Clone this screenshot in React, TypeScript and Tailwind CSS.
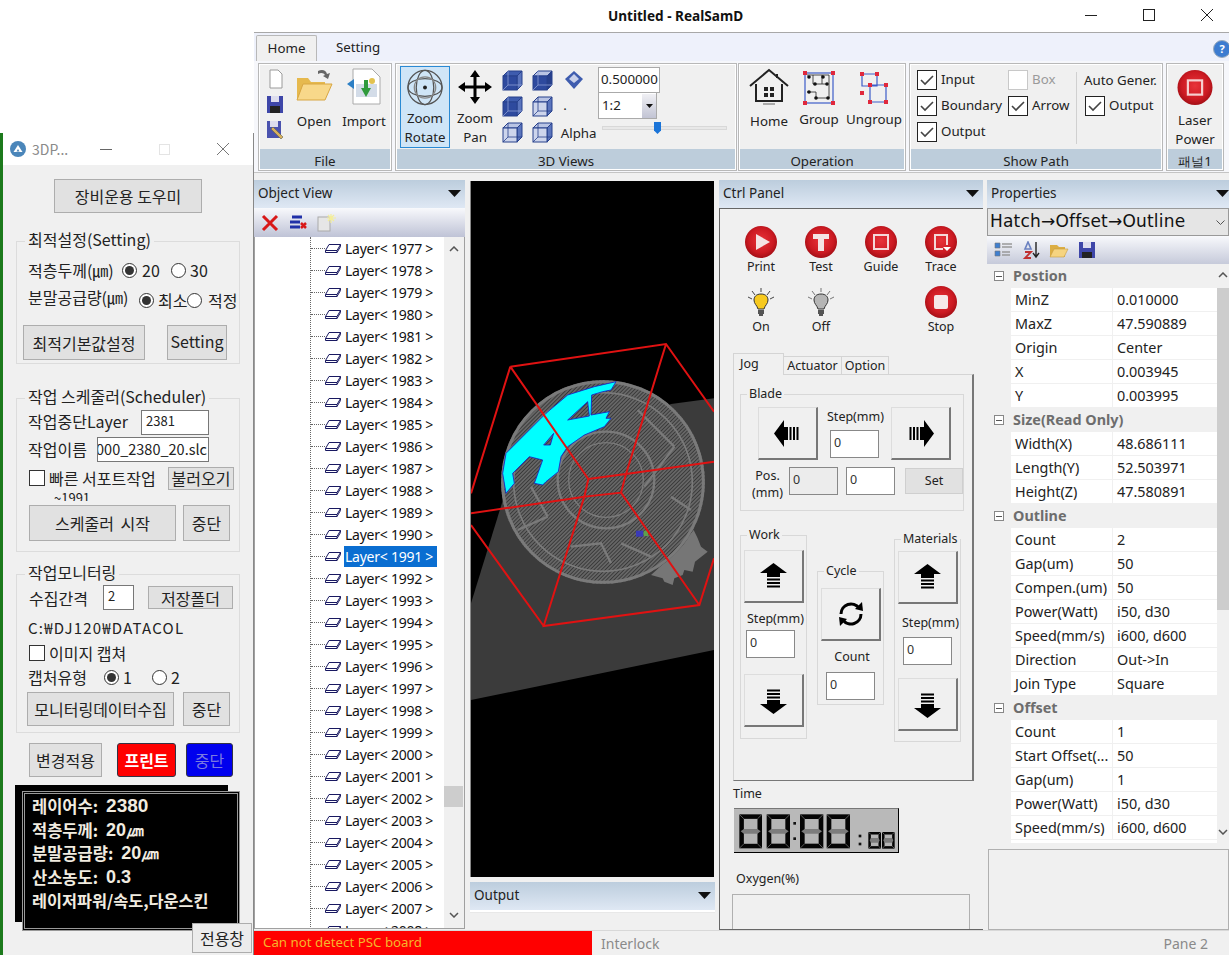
import type { ReactNode } from "react";

const ko = "font-['Noto_Sans_CJK_KR','Noto_Sans',sans-serif]";

const layers: number[] = [];
for (let n = 1977; n <= 2008; n++) layers.push(n);

const props: { title: string; rows: [string, string][] }[] = [
  {
    title: "Postion",
    rows: [
      ["MinZ", "0.010000"],
      ["MaxZ", "47.590889"],
      ["Origin", "Center"],
      ["X", "0.003945"],
      ["Y", "0.003995"],
    ],
  },
  {
    title: "Size(Read Only)",
    rows: [
      ["Width(X)", "48.686111"],
      ["Length(Y)", "52.503971"],
      ["Height(Z)", "47.580891"],
    ],
  },
  {
    title: "Outline",
    rows: [
      ["Count", "2"],
      ["Gap(um)", "50"],
      ["Compen.(um)", "50"],
      ["Power(Watt)", "i50, d30"],
      ["Speed(mm/s)", "i600, d600"],
      ["Direction", "Out->In"],
      ["Join Type", "Square"],
    ],
  },
  {
    title: "Offset",
    rows: [
      ["Count", "1"],
      ["Start Offset(...", "50"],
      ["Gap(um)", "1"],
      ["Power(Watt)", "i50, d30"],
      ["Speed(mm/s)", "i600, d600"],
    ],
  },
];

function Caret() {
  return (
    <svg width="13" height="8" viewBox="0 0 13 8">
      <polygon points="0,0 13,0 6.5,7" fill="#111" />
    </svg>
  );
}

function PanelHeader({ title }: { title: string }) {
  return (
    <div className="flex h-[28px] shrink-0 items-center justify-between bg-gradient-to-b from-[#bccddd] to-[#dfe8f4] pl-[4px] pr-[4px] text-[13.5px] text-[#222]">
      <span className="-mt-[1px]">{title}</span>
      <Caret />
    </div>
  );
}

function RibbonGroup({
  title,
  className,
  children,
}: {
  title: string;
  className: string;
  children: ReactNode;
}) {
  return (
    <div className={`flex shrink-0 flex-col border border-[#b8b8b8] bg-[#f0f0f0] ${className}`}>
      <div className="h-[86px] overflow-hidden border-x border-t border-white">{children}</div>
      <div className="flex h-[21px] items-center justify-center border border-t-0 border-white bg-[#bdcddb] pt-[5px] text-[13.3px] text-[#222]">
        {title}
      </div>
    </div>
  );
}

function BigLabel({ lines }: { lines: string[] }) {
  return (
    <div className="text-center text-[13.3px] leading-[19px] text-[#222]">
      {lines.map((l) => (
        <div key={l}>{l}</div>
      ))}
    </div>
  );
}

function Cube({ kind }: { kind: number }) {
  const solid = kind < 2;
  return (
    <svg width="21" height="21" viewBox="0 0 21 21">
      <polygon points="1,6 6,1 20,1 15,6" fill={kind === 0 ? "#3e5cae" : "#b9c4e4"} stroke="#27408c" />
      <polygon points="15,6 20,1 20,15 15,20" fill={kind === 1 ? "#27408c" : "#5b75bd"} stroke="#27408c" />
      <rect x="1" y="6" width="14" height="14" fill={solid ? "#2e4a9e" : "#cdd5ec"} stroke="#27408c" />
      <path d="M6 1V15H20M6 15L1 20" fill="none" stroke={solid ? "#8ea0d4" : "#27408c"} strokeWidth="0.8" />
    </svg>
  );
}

function Check({ on, off }: { on?: boolean; off?: boolean }) {
  return (
    <span
      className={`flex h-[20px] w-[20px] shrink-0 items-center justify-center border bg-white ${off ? "border-[#c8c8c8]" : "border-[#222]"}`}
    >
      {on && (
        <svg width="14" height="12" viewBox="0 0 14 12">
          <path d="M1 6L5 10L13 2" fill="none" stroke="#444" strokeWidth="1.6" />
        </svg>
      )}
    </span>
  );
}

function CheckRow({ label, off }: { label: string; off?: boolean }) {
  return (
    <div className={`flex h-[26px] items-center gap-[4px] text-[13.3px] ${off ? "text-[#9a9a9a]" : "text-[#222]"}`}>
      <Check on={!off} off={off} />
      <span>{label}</span>
    </div>
  );
}

function RedCircle({ size, children }: { size: number; children: ReactNode }) {
  return (
    <svg width={size} height={size} viewBox="0 0 32 32">
      <defs>
        <radialGradient id="redball" cx="50%" cy="45%" r="55%">
          <stop offset="0%" stopColor="#e8343a" />
          <stop offset="70%" stopColor="#cc1a22" />
          <stop offset="100%" stopColor="#a40f16" />
        </radialGradient>
      </defs>
      <circle cx="16" cy="16" r="16" fill="url(#redball)" />
      {children}
    </svg>
  );
}

function Bulb({ on }: { on: boolean }) {
  return (
    <svg width="26" height="30" viewBox="0 0 26 30">
      <path
        d="M13 0V4M4 3L7 7M22 3L19 7M0 9L4 11M26 9L22 11"
        stroke={on ? "#444" : "#777"}
        strokeWidth="1"
        fill="none"
      />
      <path
        d="M13 6C8 6 6 9 6 12C6 16 9 17 10 21H16C17 17 20 16 20 12C20 9 18 6 13 6Z"
        fill={on ? "#f7c91e" : "#b5b5b5"}
        stroke="#333"
      />
      <path d="M10 23H16M10 25H16M11 27H15" stroke="#222" strokeWidth="1.4" />
    </svg>
  );
}

function CtrlButton({ label, children }: { label: string; children: ReactNode }) {
  return (
    <div className="flex w-[60px] flex-col items-center text-[12.5px] leading-[16px] text-[#222]">
      <div className="flex h-[32px] items-end">{children}</div>
      <span className="mt-[1px]">{label}</span>
    </div>
  );
}

function JogArrow({ className }: { className?: string }) {
  return (
    <svg width="27" height="27" viewBox="0 0 27 27" className={className}>
      <polygon points="13.5,0 27,10 20,10 20,14 7,14 7,10 0,10" fill="#000" />
      <rect x="7" y="15.5" width="13" height="2" fill="#000" />
      <rect x="7" y="19" width="13" height="2" fill="#000" />
      <rect x="7" y="22.5" width="13" height="2" fill="#000" />
    </svg>
  );
}

function JogButton({ children }: { children: ReactNode }) {
  return (
    <div className="flex h-[53px] w-[60px] items-center justify-center border border-b-2 border-r-2 border-b-[#777] border-l-[#ddd] border-r-[#777] border-t-[#ddd] bg-[#f0f0f0]">
      {children}
    </div>
  );
}

function SmallInput({ disabled }: { disabled?: boolean }) {
  return (
    <div
      className={`h-[28px] w-[49px] border border-[#888] pl-[3px] text-[12.5px] leading-[24px] text-[#333] ${disabled ? "bg-[#ececec]" : "bg-white"}`}
    >
      0
    </div>
  );
}

function Group({
  title,
  className,
  children,
}: {
  title: string;
  className?: string;
  children: ReactNode;
}) {
  return (
    <fieldset className={`border border-[#d8d8d8] ${className ?? ""}`}>
      <legend className="ml-[6px] px-[2px] text-[12.5px] leading-[14px] text-[#222]">{title}</legend>
      {children}
    </fieldset>
  );
}

function LcdDigit({ x, y, w, h }: { x: number; y: number; w: number; h: number }) {
  const half = h / 2;
  const t = w * 0.2;
  return (
    <g>
      <rect x={x} y={y} width={w} height={h} fill="#050505" />
      <rect x={x + t} y={y + t} width={w - 2 * t} height={half - t - 4} fill="#b4b4b4" />
      <rect x={x + t} y={y + half + 4} width={w - 2 * t} height={half - t - 4} fill="#b4b4b4" />
      <polygon
        points={`${x + 4},${y + half} ${x + t},${y + half - 7} ${x + w - t},${y + half - 7} ${x + w - 4},${y + half} ${x + w - t},${y + half + 7} ${x + t},${y + half + 7}`}
        fill="#7c7c7c"
      />
      <path
        d={`M${x} ${y}L${x + t} ${y + t}M${x + w} ${y}L${x + w - t} ${y + t}M${x} ${y + h}L${x + t} ${y + h - t}M${x + w} ${y + h}L${x + w - t} ${y + h - t}`}
        stroke="#aaa"
        strokeWidth="1.5"
      />
    </g>
  );
}

function Viewport() {
  // drawn in 3x coordinates, origin at (470,330) of the page
  return (
    <svg width="243" height="696" viewBox="0 -447 729 2088" className="block bg-black">
      <defs>
        <pattern id="hatch" width="8" height="8" patternUnits="userSpaceOnUse" patternTransform="rotate(-45)">
          <rect width="8" height="8" fill="#666" />
          <rect width="8" height="2.5" fill="#353535" />
        </pattern>
      </defs>
      <polygon points="0,820 105,480 600,222 729,205 729,960 0,1110" fill="#3b3b3b" />
      <polygon
        points="540,735 575,745 580,755 605,765 610,745 635,735 640,720 665,725 672,695 710,665 690,650 680,625 668,600 600,680"
        fill="#767676"
      />
      <circle cx="396" cy="456" r="306" fill="url(#hatch)" />
      <g fill="none" stroke="#7a7a7a">
        <circle cx="396" cy="456" r="301" strokeWidth="9" />
        <circle cx="396" cy="456" r="268" strokeWidth="5" />
        <circle cx="405" cy="450" r="145" strokeWidth="7" />
        <circle cx="405" cy="450" r="112" strokeWidth="4" />
        <path
          d="M500 240L610 350M610 350L520 470M600 500L660 540M180 470L230 560M230 560L140 600M300 650L390 640L420 700M450 640L540 680"
          strokeWidth="7"
        />
      </g>
      <path
        d="M435 155L370 170L290 195L225 250L105 370L95 430L105 490L130 460L125 430L175 380L215 390L190 460L215 465L225 455L262 425L270 380L290 350L340 315L400 290L420 265L405 265L415 245L360 255L362 195L395 185L420 180ZM290 270L350 215L355 258ZM218 345L248 310L238 345Z"
        fill="#00ffff"
        fillRule="evenodd"
        stroke="#1420c8"
        strokeWidth="2.5"
      />
      <rect x="495" y="602" width="22" height="18" fill="#3a3ab8" />
      <rect x="518" y="602" width="14" height="16" fill="#5da04c" />
      <path
        d="M118 110L585 42L729 245M118 110L0 490M118 110L352 447M585 42L465 432M352 447L465 432L450 488L340 500L352 447M450 488L685 825M465 432L729 395M340 500L0 550M340 500L218 888L685 825L729 685M218 888L0 585"
        fill="none"
        stroke="#e01212"
        strokeWidth="6"
      />
    </svg>
  );
}

function SmallButton({ className, children }: { className: string; children: ReactNode }) {
  return (
    <div
      className={`flex items-center justify-center whitespace-nowrap border border-[#adadad] bg-[#e1e1e1] text-[#222] ${className}`}
    >
      {children}
    </div>
  );
}

function Radio({ on }: { on?: boolean }) {
  return (
    <span className="flex h-[15px] w-[15px] shrink-0 items-center justify-center rounded-full border border-[#333] bg-white">
      {on && <span className="h-[9px] w-[9px] rounded-full bg-[#333]" />}
    </span>
  );
}

function LeftGroup({
  title,
  className,
  children,
}: {
  title: string;
  className: string;
  children: ReactNode;
}) {
  return (
    <fieldset className={`mx-[13px] border border-[#dcdcdc] ${className}`}>
      <legend className="relative -top-[2px] ml-[8px] px-[3px] text-[16px] leading-[18px] text-[#222]">{title}</legend>
      {children}
    </fieldset>
  );
}

function LeftWindow() {
  return (
    <div
      className={`relative h-[822px] w-[254px] shrink-0 border-l-[3px] border-r border-l-[#1c7a1c] border-r-[#888] bg-[#f0f0f0] text-[16px] text-[#222] ${ko}`}
    >
      <div className="flex h-[32px] items-center bg-white pl-[7px] text-[14px] text-[#8a8a8a]">
        <svg width="16" height="16" viewBox="0 0 16 16">
          <circle cx="8" cy="8" r="8" fill="#4b86ba" />
          <path d="M3.5 11L8 4L12.5 11Z" fill="#fff" />
          <path d="M6.5 10.5L8 8L9.5 10.5Z" fill="#4b86ba" />
        </svg>
        <span className="ml-[6px] w-[68px]">3DP...</span>
        <span className="h-px w-[12px] bg-[#666]" />
        <span className="ml-[47px] h-[11px] w-[11px] border border-[#e4e4e4]" />
        <svg width="14" height="14" viewBox="0 0 14 14" className="ml-[46px]">
          <path d="M1 1L13 13M13 1L1 13" stroke="#777" />
        </svg>
      </div>

      <SmallButton className="ml-[51px] mt-[14px] h-[34px] w-[148px]">장비운용 도우미</SmallButton>

      <LeftGroup title="최적설정(Setting)" className="mt-[19px] h-[132px]">
        <div className="mt-[8px] flex h-[24px] items-center whitespace-nowrap pl-[11px]">
          <span className="w-[94px]">적층두께(㎛)</span>
          <Radio on />
          <span className="ml-[5px] w-[29px]">20</span>
          <Radio />
          <span className="ml-[4px]">30</span>
        </div>
        <div className="mt-[5px] flex h-[26px] items-center whitespace-nowrap pl-[11px]">
          <span className="-mt-[6px] w-[111px]">분말공급량(㎛)</span>
          <Radio on />
          <span className="ml-[4px] w-[29px]">최소</span>
          <Radio />
          <span className="ml-[6px]">적정</span>
        </div>
        <div className="mt-[12px] flex pl-[6px]">
          <SmallButton className="h-[35px] w-[122px]">최적기본값설정</SmallButton>
          <SmallButton className="ml-[22px] h-[35px] w-[60px] pb-[3px]">Setting</SmallButton>
        </div>
      </LeftGroup>

      <LeftGroup title="작업 스케줄러(Scheduler)" className="mt-[25px] h-[163px]">
        <div className="mt-[2px] flex h-[26px] items-center pl-[11px]">
          <span className="-mt-[3px] w-[113px]">작업중단Layer</span>
          <span className="flex h-[25px] w-[68px] items-start border border-[#777] bg-white pl-[4px] text-[13px] leading-[20px]">
            2381
          </span>
        </div>
        <div className="mt-[1px] flex h-[26px] items-center pl-[11px]">
          <span className="w-[69px]">작업이름</span>
          <span className="flex h-[25px] w-[112px] justify-end overflow-hidden whitespace-nowrap border border-[#777] bg-white pr-[1px] text-[14.5px] leading-[22px]">
            000_2380_20.slc
          </span>
        </div>
        <div className="mt-[4px] flex h-[24px] items-center pl-[12px]">
          <span className="h-[16px] w-[16px] shrink-0 border border-[#333] bg-white" />
          <span className="ml-[4px] w-[119px] whitespace-nowrap">빠른 서포트작업</span>
          <SmallButton className="h-[23px] w-[66px]">불러오기</SmallButton>
        </div>
        <div className="h-[11px] overflow-hidden pl-[37px] text-[13px] leading-[16px]">~1991</div>
        <div className="mt-[4px] flex pl-[12px]">
          <SmallButton className="h-[36px] w-[147px] [word-spacing:3px]">스케줄러 시작</SmallButton>
          <SmallButton className="ml-[7px] h-[36px] w-[47px]">중단</SmallButton>
        </div>
      </LeftGroup>

      <LeftGroup title="작업모니터링" className="mt-[13px] h-[168px]">
        <div className="mt-[2px] flex h-[25px] items-center pl-[12px]">
          <span className="w-[74px]">수집간격</span>
          <span className="h-[25px] w-[31px] border border-[#777] bg-white pl-[4px] text-[13px] leading-[20px]">2</span>
          <SmallButton className="ml-[14px] h-[23px] w-[85px]">저장폴더</SmallButton>
        </div>
        <div className="mt-[7px] h-[22px] pl-[11px] text-[15px] leading-[22px] tracking-[1.2px]">C:₩DJ120₩DATACOL</div>
        <div className="mt-[3px] flex h-[22px] items-center pl-[12px]">
          <span className="h-[16px] w-[16px] shrink-0 border border-[#333] bg-white" />
          <span className="ml-[4px]">이미지 캡쳐</span>
        </div>
        <div className="mt-[1px] flex h-[24px] items-center pl-[11px]">
          <span className="w-[76px]">캡처유형</span>
          <Radio on />
          <span className="ml-[4px] w-[29px]">1</span>
          <Radio />
          <span className="ml-[4px]">2</span>
        </div>
        <div className="mt-[3px] flex pl-[10px]">
          <SmallButton className="h-[34px] w-[147px]">모니터링데이터수집</SmallButton>
          <SmallButton className="ml-[9px] h-[34px] w-[47px]">중단</SmallButton>
        </div>
      </LeftGroup>

      <div className="ml-[26px] mt-[10px] flex">
        <SmallButton className="h-[34px] w-[73px]">변경적용</SmallButton>
        <div className="ml-[15px] flex h-[34px] w-[59px] items-center justify-center rounded-[3px] border border-[#334] bg-[#ff0000] font-bold text-white">
          프린트
        </div>
        <div className="ml-[10px] flex h-[34px] w-[47px] items-center justify-center rounded-[3px] border border-[#334] bg-[#0000ee] text-[#7a7ae0]">
          중단
        </div>
      </div>

      <div className="relative ml-[12px] mt-[8px] h-[137px] w-[213px] bg-black">
        <div className="absolute left-[7px] top-[6px] h-[140px] w-[218px] border-[3px] border-double border-[#999] bg-black pl-[7px] font-bold text-[#f1ece0]">
          <div className="flex h-[24px] items-center gap-[8px] text-[16.5px]">
            레이어수: <span className="font-['Liberation_Sans',sans-serif] text-[19px]">2380</span>
          </div>
          <div className="flex h-[24px] items-center gap-[8px] text-[16.5px]">
            적층두께: <span className="font-['Liberation_Sans',sans-serif] text-[18px]">20㎛</span>
          </div>
          <div className="flex h-[23px] items-center gap-[8px] text-[16.5px]">
            분말공급량: <span className="font-['Liberation_Sans',sans-serif] text-[18px]">20㎛</span>
          </div>
          <div className="flex h-[24px] items-center gap-[8px] text-[16.5px]">
            산소농도: <span className="font-['Liberation_Sans',sans-serif] text-[18px]">0.3</span>
          </div>
          <div className="flex h-[22px] items-center whitespace-nowrap text-[16.3px]">레이저파워/속도,다운스킨</div>
        </div>
      </div>
      <SmallButton className="absolute left-[189px] top-[790px] h-[30px] w-[60px] bg-[#ececec]">전용창</SmallButton>
    </div>
  );
}

function MainWindow() {
  return (
    <div className="flex h-[955px] w-[975px] shrink-0 flex-col bg-[#f0f0f0] font-['Noto_Sans',sans-serif]">
      {/* title bar */}
      <div className="relative flex h-[32px] shrink-0 items-center justify-center bg-white pr-[132px]">
        <span className="text-[13.6px] font-bold text-[#111]">Untitled - RealSamD</span>
        <div className="absolute right-[16px] top-[9px] flex items-center gap-[46px]">
          <span className="h-px w-[12px] bg-[#222]" />
          <span className="h-[12px] w-[12px] border border-[#222]" />
          <svg width="12" height="12" viewBox="0 0 12 12">
            <path d="M0 0L12 12M12 0L0 12" stroke="#222" />
          </svg>
        </div>
      </div>

      {/* ribbon tabs */}
      <div className="flex h-[29px] shrink-0 items-end border-t border-[#a8a8a8] bg-[#eef1fb] pl-[2px] text-[13.3px] text-[#222]">
        <div className="flex h-[26px] w-[61px] items-center justify-center rounded-t-[2px] border border-b-0 border-[#b8b8b8] bg-[#f0f0f0]">
          Home
        </div>
        <div className="flex h-[26px] w-[80px] items-center justify-center pl-[2px]">Setting</div>
        <div className="mb-[3px] ml-auto flex h-[18px] w-[16px] overflow-hidden">
          <span className="flex h-[18px] w-[18px] shrink-0 items-center justify-center rounded-full border border-[#9ab] bg-[#3c7cd0] text-[11px] font-bold text-white">
            ?
          </span>
        </div>
      </div>

      {/* ribbon */}
      <div className="flex h-[112px] shrink-0 border-b border-[#c4c4c4] bg-[#f6f7fb] pl-[4px] pt-[2px]">
        <RibbonGroup title="File" className="h-[108px] w-[134px]">
          <div className="flex h-full pl-[5px] pt-[3px]">
            <div className="flex flex-col gap-[3px]">
              <svg width="20" height="22" viewBox="0 0 20 22">
                <path d="M5 2H13L17 6V20H5Z" fill="#fff" stroke="#9a9a9a" />
              </svg>
              <svg width="20" height="22" viewBox="0 0 20 22">
                <path d="M2 3H18V20H2Z" fill="#3e46a8" />
                <rect x="6" y="3" width="8" height="6" fill="#dde" />
                <rect x="5" y="13" width="10" height="7" fill="#222" />
              </svg>
              <svg width="20" height="22" viewBox="0 0 20 22">
                <path d="M2 3H16V20H2Z" fill="#4a52ae" />
                <rect x="5" y="3" width="8" height="6" fill="#dde" />
                <path d="M8 9L18 19L16 21L6 11Z" fill="#d8b060" stroke="#664" strokeWidth="0.6" />
              </svg>
            </div>
            <div className="ml-[7px] flex w-[44px] flex-col items-center">
              <svg width="40" height="38" viewBox="0 0 40 38">
                <path d="M3 10H14L17 14H31V30H3Z" fill="#e6b94e" />
                <path d="M3 32L9 16H38L31 32Z" fill="#f8d88a" stroke="#d8a642" />
                <path d="M24 3C28 1 32 2 33 6L36 5L34 11L29 8L31 7C30 5 27 4 24 6Z" fill="#666" />
              </svg>
              <div className="mt-[6px]">
                <BigLabel lines={["Open"]} />
              </div>
            </div>
            <div className="ml-[6px] flex w-[44px] flex-col items-center">
              <svg width="36" height="38" viewBox="0 0 36 38">
                <path d="M7 1H26L34 9V36H7Z" fill="#fff" stroke="#aaa" />
                <rect x="10" y="16" width="21" height="13" fill="#d3dce8" />
                <path d="M1 16L8 11V21Z" fill="#2c7fc5" />
                <path d="M18 12H22V20H25L20 29L15 20H18Z" fill="#2f9a3c" />
                <circle cx="26" cy="13" r="3" fill="#e2c24f" />
              </svg>
              <div className="mt-[6px]">
                <BigLabel lines={["Import"]} />
              </div>
            </div>
          </div>
        </RibbonGroup>

        <RibbonGroup title="3D Views" className="ml-[3px] h-[108px] w-[342px]">
          <div className="flex h-full pl-[3px] pt-[1px]">
            <div className="flex h-[82px] w-[50px] flex-col items-center overflow-hidden border border-[#2a8ad4] bg-[#cfe5f7]">
              <svg width="38" height="38" viewBox="0 0 38 38" className="mt-[2px]">
                <g fill="none" stroke="#555" strokeWidth="1.3">
                  <circle cx="19" cy="19" r="17.5" />
                  <ellipse cx="19" cy="19" rx="17.5" ry="9" />
                  <ellipse cx="19" cy="19" rx="9" ry="17.5" />
                  <circle cx="19" cy="19" r="11" stroke="#888" />
                </g>
                <circle cx="19" cy="19" r="2" fill="#222" />
              </svg>
              <div className="mt-[3px]">
                <BigLabel lines={["Zoom", "Rotate"]} />
              </div>
            </div>
            <div className="flex w-[50px] flex-col items-center">
              <svg width="36" height="36" viewBox="0 0 36 36" className="mt-[3px]">
                <path
                  d="M18 1L23 8H19.5V16.5H28V13L35 18L28 23V19.5H19.5V28H23L18 35L13 28H16.5V19.5H8V23L1 18L8 13V16.5H16.5V8H13Z"
                  fill="#000"
                />
              </svg>
              <div className="mt-[4px]">
                <BigLabel lines={["Zoom", "Pan"]} />
              </div>
            </div>
            <div className="-ml-[3px] mt-[1px] grid h-[78px] w-[92px] grid-cols-3 grid-rows-3 items-center justify-items-center">
              <Cube kind={0} />
              <Cube kind={1} />
              <svg width="20" height="20" viewBox="0 0 20 20">
                <polygon points="10,1 19,9 10,19 1,9" fill="#3e5cae" />
                <polygon points="10,4 15,9 10,13 5,9" fill="#c8d0ea" />
              </svg>
              <Cube kind={0} />
              <Cube kind={2} />
              <span className="ml-[5px] justify-self-start text-[13.3px] leading-none text-[#222]">.</span>
              <Cube kind={2} />
              <Cube kind={2} />
              <span className="ml-[10px] mt-[4px] text-[13.3px] text-[#222]">Alpha</span>
            </div>
            <div className="ml-[9px] mt-[1px] flex flex-col">
              <div className="flex h-[26px] w-[62px] items-center border border-[#aaa] bg-white pl-[2px] text-[13.3px] text-[#222]">
                0.500000
              </div>
              <div className="flex h-[26px] w-[59px] items-center justify-between border border-t-0 border-[#aaa] bg-white pl-[3px] text-[13.3px] text-[#222]">
                <span>1:2</span>
                <span className="flex h-[24px] w-[14px] items-center justify-center bg-gradient-to-b from-[#f0f0f4] to-[#c2c4d4]">
                  <svg width="7" height="4" viewBox="0 0 7 4">
                    <polygon points="0,0 7,0 3.5,4" fill="#111" />
                  </svg>
                </span>
              </div>
              <div className="relative ml-[4px] mt-[7px] h-[4px] w-[125px] border border-[#d8d8d8] bg-[#e8e8e8]">
                <span className="absolute -top-[5px] left-[51px] h-[12px] w-[7px] bg-[#1a74d8] [clip-path:polygon(0_0,100%_0,100%_70%,50%_100%,0_70%)]" />
              </div>
            </div>
          </div>
        </RibbonGroup>

        <RibbonGroup title="Operation" className="ml-[1px] h-[108px] w-[168px]">
          <div className="flex h-full pt-[3px]">
            <div className="flex w-[58px] flex-col items-center">
              <svg width="40" height="40" viewBox="0 0 40 40">
                <path d="M1 18L20 2L39 18" fill="none" stroke="#222" strokeWidth="2" />
                <path d="M7 16V33H33V16" fill="none" stroke="#222" strokeWidth="2" />
                <path d="M28 6V10" stroke="#222" strokeWidth="2" />
                <path d="M15 19h4v4h-4zM21 19h4v4h-4zM15 25h4v4h-4zM21 25h4v4h-4z" fill="#222" />
                <path d="M14 36H26" stroke="#aaa" strokeWidth="2" />
              </svg>
              <div className="mt-[4px]">
                <BigLabel lines={["Home"]} />
              </div>
            </div>
            <div className="flex w-[42px] flex-col items-center">
              <svg width="34" height="36" viewBox="0 0 34 36" className="mt-[2px]">
                <rect x="3" y="3" width="28" height="30" fill="none" stroke="#3c5cc8" strokeWidth="1.2" />
                <path d="M5 5H27V28M11 5V14H24M5 22H14V28H26M20 5V14" fill="none" stroke="#222" strokeWidth="0.8" />
                <g fill="#111">
                  <circle cx="7" cy="7" r="1.8" />
                  <circle cx="21" cy="7" r="1.8" />
                  <circle cx="13" cy="14" r="1.8" />
                  <circle cx="25" cy="14" r="1.8" />
                  <circle cx="7" cy="22" r="1.8" />
                  <circle cx="14" cy="28" r="1.8" />
                  <circle cx="26" cy="28" r="1.8" />
                </g>
                <g fill="#e0283c">
                  <rect x="1" y="1" width="4" height="4" />
                  <rect x="29" y="1" width="4" height="4" />
                  <rect x="1" y="31" width="4" height="4" />
                  <rect x="29" y="31" width="4" height="4" />
                </g>
              </svg>
              <div className="mt-[4px]">
                <BigLabel lines={["Group"]} />
              </div>
            </div>
            <div className="ml-[6px] flex w-[56px] flex-col items-center">
              <svg width="28" height="36" viewBox="0 0 28 36" className="mt-[3px]">
                <path d="M2 3H17V15H2ZM10 14H26V31H10Z" fill="none" stroke="#3c5cc8" strokeWidth="1.2" />
                <g fill="#e0283c">
                  <rect x="0" y="1" width="4" height="4" />
                  <rect x="15" y="1" width="4" height="4" />
                  <rect x="0" y="20" width="4" height="4" />
                  <rect x="8" y="12" width="4" height="4" />
                  <rect x="24" y="12" width="4" height="4" />
                  <rect x="8" y="29" width="4" height="4" />
                  <rect x="24" y="29" width="4" height="4" />
                </g>
              </svg>
              <div className="mt-[3px]">
                <BigLabel lines={["Ungroup"]} />
              </div>
            </div>
          </div>
        </RibbonGroup>

        <RibbonGroup title="Show Path" className="ml-[3px] h-[108px] w-[254px]">
          <div className="flex h-full pl-[6px] pt-[2px]">
            <div className="w-[91px]">
              <CheckRow label="Input" />
              <CheckRow label="Boundary" />
              <CheckRow label="Output" />
            </div>
            <div className="w-[68px]">
              <CheckRow label="Box" off />
              <CheckRow label="Arrow" />
            </div>
            <div className="mt-[5px] h-[72px] w-px bg-[#d0d0d0]" />
            <div className="ml-[7px]">
              <div className="h-[26px] whitespace-nowrap text-[13.3px] leading-[27px] text-[#222]">Auto Gener.</div>
              <div className="pl-[1px]">
                <CheckRow label="Output" />
              </div>
            </div>
          </div>
        </RibbonGroup>

        <RibbonGroup title="패널1" className="ml-[3px] h-[108px] w-[58px]">
          <div className="flex h-full flex-col items-center pt-[5px]">
            <RedCircle size={40}>
              <rect x="9.5" y="9.5" width="13" height="13" fill="none" stroke="#f6d0d0" strokeWidth="2" />
            </RedCircle>
            <div className="mt-[6px]">
              <BigLabel lines={["Laser", "Power"]} />
            </div>
          </div>
        </RibbonGroup>
      </div>

      {/* docked panels */}
      <div className="flex h-[757px] shrink-0 pt-[7px]">
        {/* object view */}
        <div className="flex h-full w-[211px] shrink-0 flex-col">
          <PanelHeader title="Object View" />
          <div className="flex h-[29px] shrink-0 items-center gap-[9px] bg-gradient-to-b from-[#f8f9fc] to-[#bfc3d6] pl-[7px]">
            <svg width="18" height="18" viewBox="0 0 18 18">
              <path d="M2 2L16 16M16 2L2 16" stroke="#d81818" strokeWidth="3" />
            </svg>
            <svg width="20" height="16" viewBox="0 0 20 16">
              <path d="M4 2H14M2 7H12M2 12H12" stroke="#2030a8" strokeWidth="3" />
              <path d="M13 8L18 13M18 8L13 13" stroke="#d81818" strokeWidth="2.5" />
            </svg>
            <svg width="20" height="18" viewBox="0 0 20 18">
              <rect x="1" y="3" width="12" height="14" fill="#e6e6e6" stroke="#aaa" />
              <path d="M14 0V9M10 4H19M11 1L17 7M17 1L11 7" stroke="#f4ee9a" strokeWidth="1.2" />
            </svg>
          </div>
          <div className="relative flex h-[692px] border-x border-b border-[#a0a0a0] bg-white">
            <div className="h-full w-[189px] overflow-hidden">
              <div className="ml-[55px] border-l border-dotted border-[#666]">
                {layers.map((n) => (
                  <div key={n} className="flex h-[22px] items-center">
                    <span className="w-[14px] border-t border-dotted border-[#666]" />
                    <svg width="16" height="9" viewBox="0 0 16 9">
                      <path
                        d="M4 0.5H15.5L12 6.5H0.5ZM0.5 6.5V8.5H12L15.5 2.5V0.5M12 6.5V8.5"
                        fill="#fff"
                        stroke="#181860"
                      />
                    </svg>
                    <span
                      className={`ml-[3px] whitespace-nowrap px-[1px] text-[14px] tracking-[-0.25px] ${n === 1991 ? "w-[93px] bg-[#0a6ed1] text-white" : "text-[#111]"}`}
                    >
                      {`Layer< ${n} >`}
                    </span>
                  </div>
                ))}
              </div>
            </div>
            <div className="relative h-full w-[20px] bg-[#f0f0f0]">
              <svg width="10" height="6" viewBox="0 0 10 6" className="absolute left-[5px] top-[9px]">
                <path d="M1 5L5 1L9 5" fill="none" stroke="#555" strokeWidth="1.5" />
              </svg>
              <span className="absolute left-0 top-[549px] h-[21px] w-[19px] bg-[#cdcdcd]" />
              <svg width="10" height="6" viewBox="0 0 10 6" className="absolute bottom-[10px] left-[5px]">
                <path d="M1 1L5 5L9 1" fill="none" stroke="#555" strokeWidth="1.5" />
              </svg>
            </div>
          </div>
        </div>

        {/* viewport + output */}
        <div className="ml-[5px] flex h-full w-[245px] shrink-0 flex-col">
          <div className="mt-px h-[696px] w-[244px] border-l border-[#888]">
            <Viewport />
          </div>
          <div className="mt-[5px]">
            <PanelHeader title="Output" />
          </div>
          <div className="h-[3px] border-b border-[#e8e8e8] bg-white" />
        </div>

        {/* ctrl panel */}
        <div className="ml-[4px] flex h-full w-[264px] shrink-0 flex-col">
          <PanelHeader title="Ctrl Panel" />
          <div className="h-[722px] overflow-hidden border-b border-l border-t border-[#666] pl-[13px] text-[12.5px] text-[#222]">
            <div className="-ml-[2px] mt-[17px] grid w-[240px] grid-cols-4">
              <CtrlButton label="Print">
                <RedCircle size={32}>
                  <polygon points="11,8 25,16 11,24" fill="#f4e4e4" />
                </RedCircle>
              </CtrlButton>
              <CtrlButton label="Test">
                <RedCircle size={32}>
                  <path d="M8 8H24V13H19V25H13V13H8Z" fill="#f4e4e4" />
                </RedCircle>
              </CtrlButton>
              <CtrlButton label="Guide">
                <RedCircle size={32}>
                  <rect x="9" y="9" width="14" height="14" fill="none" stroke="#f4d8d8" strokeWidth="2" />
                </RedCircle>
              </CtrlButton>
              <CtrlButton label="Trace">
                <RedCircle size={32}>
                  <path d="M22 19V9H10V23H18" fill="none" stroke="#f4d8d8" strokeWidth="2" />
                  <polygon points="18,21 26,21 22,25" fill="#fff" />
                </RedCircle>
              </CtrlButton>
            </div>
            <div className="-ml-[2px] mt-[11px] grid w-[240px] grid-cols-4">
              <CtrlButton label="On">
                <Bulb on />
              </CtrlButton>
              <CtrlButton label="Off">
                <Bulb on={false} />
              </CtrlButton>
              <span />
              <CtrlButton label="Stop">
                <RedCircle size={32}>
                  <rect x="9" y="9" width="14" height="14" rx="2" fill="#f6e8e8" />
                </RedCircle>
              </CtrlButton>
            </div>

            <div className="mt-[18px] flex h-[21px] items-end leading-[17px]">
              <div className="z-10 -mb-px h-[22px] w-[51px] border border-b-0 border-[#d4d4d4] bg-[#f0f0f0] pl-[6px] pt-[1px]">
                Jog
              </div>
              <div className="h-[18px] w-[58px] border-r border-t border-[#d4d4d4] text-center">Actuator</div>
              <div className="h-[18px] w-[47px] border-r border-t border-[#d4d4d4] text-center">Option</div>
            </div>
            <div className="h-[407px] w-[241px] border-y border-l border-r-2 border-b-[#777] border-l-[#d4d4d4] border-r-[#777] border-t-[#d4d4d4] px-[6px]">
              <Group title="Blade" className="mt-[12px] h-[124px] w-[222px]">
                <div className="mt-[6px] flex pl-[17px]">
                  <JogButton>
                    <JogArrow className="-rotate-90" />
                  </JogButton>
                  <div className="ml-[9px] w-[64px]">
                    <div className="mt-[1px] h-[22px] leading-[18px]">Step(mm)</div>
                    <div className="ml-[3px]">
                      <SmallInput />
                    </div>
                  </div>
                  <JogButton>
                    <JogArrow className="rotate-90" />
                  </JogButton>
                </div>
                <div className="mt-[7px] flex pl-[10px]">
                  <div className="-ml-[2px] w-[37px] text-center leading-[17px]">
                    <div>Pos.</div>
                    <div>(mm)</div>
                  </div>
                  <div className="ml-[3px]">
                    <SmallInput disabled />
                  </div>
                  <div className="ml-[8px]">
                    <SmallInput />
                  </div>
                  <div className="ml-[10px] mt-px flex h-[26px] w-[58px] items-center justify-center border border-[#cfcfcf] bg-[#e1e1e1]">
                    Set
                  </div>
                </div>
              </Group>

              <div className="mt-[16px] flex items-start">
                <Group title="Work" className="mt-[1px] h-[211px] w-[67px]">
                  <div className="pl-[3px] pt-[8px]">
                    <JogButton>
                      <JogArrow />
                    </JogButton>
                    <div className="mt-[7px] h-[20px] whitespace-nowrap pl-[3px] leading-[18px]">Step(mm)</div>
                    <div className="ml-[2px]">
                      <SmallInput />
                    </div>
                    <div className="mt-[16px]">
                      <JogButton>
                        <JogArrow className="rotate-180" />
                      </JogButton>
                    </div>
                  </div>
                </Group>
                <Group title="Cycle" className="ml-[10px] mt-[37px] h-[141px] w-[67px]">
                  <div className="pl-[3px] pt-[10px]">
                    <JogButton>
                      <svg width="26" height="28" viewBox="0 0 26 28">
                        <path d="M3 14A10 10 0 0 1 21 8M23 14A10 10 0 0 1 5 20" fill="none" stroke="#000" strokeWidth="3" />
                        <polygon points="24,2 25,11 17,9" fill="#000" />
                        <polygon points="2,26 1,17 9,19" fill="#000" />
                      </svg>
                    </JogButton>
                    <div className="mt-[7px] h-[24px] text-center leading-[18px]">Count</div>
                    <div className="ml-[5px]">
                      <SmallInput />
                    </div>
                  </div>
                </Group>
                <Group title="Materials" className="ml-[10px] mt-[5px] h-[210px] w-[67px]">
                  <div className="pl-[3px] pt-[5px]">
                    <JogButton>
                      <JogArrow />
                    </JogButton>
                    <div className="mt-[10px] h-[23px] whitespace-nowrap pl-[4px] leading-[18px]">Step(mm)</div>
                    <div className="ml-[5px]">
                      <SmallInput />
                    </div>
                    <div className="mt-[13px]">
                      <JogButton>
                        <JogArrow className="rotate-180" />
                      </JogButton>
                    </div>
                  </div>
                </Group>
              </div>
            </div>

            <div className="mt-[4px] h-[18px] leading-[18px]">Time</div>
            <div className="ml-[1px] mt-[5px] h-[45px] w-[165px] border-b border-r border-t border-black border-t-[#777] bg-[#b9b9b9]">
              <svg width="165" height="45" viewBox="0 0 495 133" className="block">
                <LcdDigit x={16} y={15} w={68} h={102} />
                <LcdDigit x={98} y={15} w={70} h={102} />
                <rect x="178" y="38" width="8" height="8" fill="#111" />
                <rect x="178" y="84" width="8" height="8" fill="#111" />
                <LcdDigit x={198} y={15} w={70} h={102} />
                <LcdDigit x={278} y={15} w={70} h={102} />
                <rect x="374" y="76" width="8" height="8" fill="#111" />
                <rect x="374" y="100" width="8" height="8" fill="#111" />
                <LcdDigit x={403} y={68} w={38} h={50} />
                <LcdDigit x={444} y={68} w={38} h={50} />
              </svg>
            </div>
            <div className="ml-[3px] mt-[17px] h-[18px] leading-[18px]">Oxygen(%)</div>
            <div className="-ml-px mt-[6px] h-[40px] w-[238px] border border-[#b0b0b0]" />
          </div>
        </div>

        {/* properties */}
        <div className="ml-[4px] flex h-full w-[242px] shrink-0 flex-col">
          <div className="w-[246px]">
            <PanelHeader title="Properties" />
          </div>
          <div className="flex h-[28px] shrink-0 items-center justify-between overflow-hidden whitespace-nowrap border border-[#999] bg-[#e5e5e5] pl-[2px] pr-[3px] font-['DejaVu_Sans',sans-serif] text-[17px] tracking-[0.2px] text-[#111]">
            <span>Hatch→Offset→Outline</span>
            <svg width="9" height="5" viewBox="0 0 9 5">
              <path d="M0.5 0.5L4.5 4.5L8.5 0.5" fill="none" stroke="#555" />
            </svg>
          </div>
          <div className="flex h-[28px] shrink-0 items-center gap-[9px] bg-gradient-to-b from-[#f8f9fc] to-[#c6cada] pl-[7px]">
            <svg width="19" height="16" viewBox="0 0 19 16">
              <path d="M1 1h5v5H1zM1 9h5v5H1z" fill="#3f7fd0" stroke="#777" strokeWidth="0.6" />
              <path d="M8 2H18M8 5H18M8 10H16M8 13H16" stroke="#999" strokeWidth="1.5" />
            </svg>
            <svg width="18" height="18" viewBox="0 0 18 18">
              <path d="M6 1L9 8H3Z" fill="none" stroke="#6a80c0" strokeWidth="1.6" />
              <path d="M3 11H9L3 17H9" fill="none" stroke="#c03030" strokeWidth="1.8" />
              <path d="M14 1V15M11 12L14 16L17 12" fill="none" stroke="#222" strokeWidth="1.4" />
            </svg>
            <svg width="20" height="16" viewBox="0 0 20 16">
              <path d="M1 3H8L10 5H16V15H1Z" fill="#dcae44" />
              <path d="M1 15L5 7H19L15 15Z" fill="#f6d480" stroke="#c89a3c" strokeWidth="0.6" />
            </svg>
            <svg width="18" height="18" viewBox="0 0 18 18">
              <path d="M1 1H17V17H1Z" fill="#3e46a8" />
              <rect x="5" y="1" width="8" height="6" fill="#dde" />
              <rect x="4" y="11" width="10" height="6" fill="#222" />
            </svg>
          </div>
          <div className="flex h-[579px] shrink-0">
            <div className="h-full w-[230px] overflow-hidden text-[14.4px]">
              {props.map((g) => (
                <div key={g.title}>
                  <div className="flex h-[24px] items-center font-bold text-[#6d6d6d]">
                    <span className="ml-[7px] mr-[9px] flex h-[10px] w-[10px] items-center justify-center border border-[#888] bg-white">
                      <span className="h-px w-[6px] bg-[#555]" />
                    </span>
                    {g.title}
                  </div>
                  {g.rows.map(([k, v], i) => (
                    <div key={k + i} className="flex h-[24px] pl-[24px] text-[#222]">
                      <div className="flex w-[102px] items-center whitespace-nowrap border-b border-r border-[#f0f0f0] bg-white pl-[4px]">
                        {k}
                      </div>
                      <div className="flex w-[104px] items-center whitespace-nowrap border-b border-[#f0f0f0] bg-white pl-[4px]">
                        {v}
                      </div>
                    </div>
                  ))}
                </div>
              ))}
              <div className="flex h-[24px] pl-[24px]">
                <div className="w-[206px] bg-white" />
              </div>
            </div>
            <div className="relative h-full w-[12px] bg-[#f0f0f0]">
              <svg width="10" height="6" viewBox="0 0 10 6" className="absolute left-[1px] top-[8px]">
                <path d="M1 5L5 1L9 5" fill="none" stroke="#555" strokeWidth="1.5" />
              </svg>
              <span className="absolute left-0 top-[24px] h-[322px] w-[12px] bg-[#cdcdcd]" />
              <svg width="10" height="6" viewBox="0 0 10 6" className="absolute bottom-[8px] left-[1px]">
                <path d="M1 1L5 5L9 1" fill="none" stroke="#555" strokeWidth="1.5" />
              </svg>
            </div>
          </div>
          <div className="ml-px mt-[6px] h-[81px] border border-[#b0b0b0] bg-[#f0f0f0]" />
        </div>
      </div>

      {/* status bar */}
      <div className="flex h-[25px] shrink-0 border-t border-[#d8d8d8] text-[14px]">
        <div className="flex h-full w-[338px] items-center bg-[#ff0000] pl-[9px] text-[13.3px] text-[#f5b52c]">
          Can not detect PSC board
        </div>
        <span className="ml-[9px] self-center text-[#8a8a8a]">Interlock</span>
        <span className="ml-auto mr-[21px] self-center text-[#8a8a8a]">Pane 2</span>
      </div>
    </div>
  );
}

export default function App() {
  return (
    <div className="flex h-[955px] w-[1229px] overflow-hidden bg-white">
      <div className="w-[254px] shrink-0 pt-[133px]">
        <LeftWindow />
      </div>
      <MainWindow />
    </div>
  );
}
